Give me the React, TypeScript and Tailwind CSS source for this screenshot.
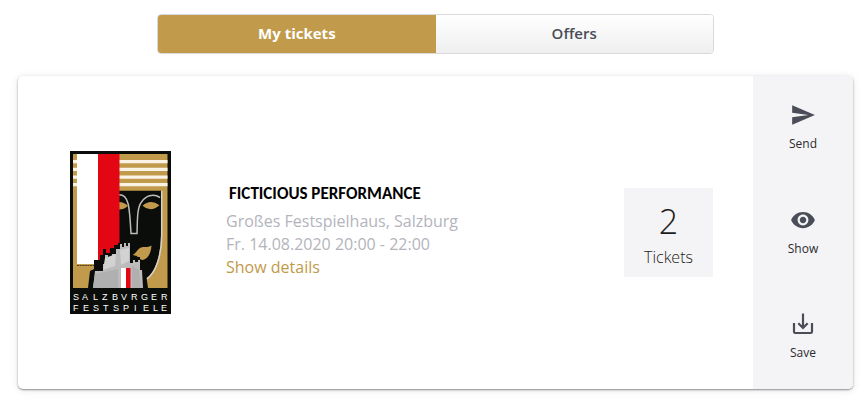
import React, { useState } from 'react';
import { MdSend, MdVisibility } from 'react-icons/md';

type Tab = 'tickets' | 'offers';

const tabs: { id: Tab; label: string }[] = [
  { id: 'tickets', label: 'My tickets' },
  { id: 'offers', label: 'Offers' },
];

const SaveIcon: React.FC = () => (
  <svg width="26" height="26" viewBox="0 0 26 26" fill="none" stroke="currentColor" strokeWidth="2.2" aria-hidden="true">
    <path d="M4 12v8.700q0 1.300 1.300 1.300h15.400q1.300 0 1.300-1.300V12" />
    <path d="M13 2.500v14.500M8.300 12.300l4.700 4.700 4.700-4.700" />
  </svg>
);

const FestivalLogo: React.FC = () => (
  <svg width="101" height="163" viewBox="0 0 101 163" role="img" aria-label="Salzburger Festspiele" className="shrink-0">
    <rect width="101" height="163" fill="#0b0d0b" />
    <rect x="3" y="3" width="94.5" height="134" fill="#c19a4b" />
    <path d="M3 10.7h94.5M3 18.4h94.5M3 26.2h94.5M3 33.6h94.5" stroke="#fbf4e6" strokeWidth="3.2" />

    {/* mask */}
    <path d="M49 39.7H91V84C91 104 85 122 76 128L72 137H49z" fill="#0b0d0b" />
    <path d="M91.7 40V84C91.7 104 86 122 76.5 128" fill="none" stroke="#d6d4cf" strokeWidth="1.5" />
    <path
      d="M49 43.8C59 43.5 59.5 56 61 82.5H67C67.5 68 67 57 71.5 51C75.5 45 83 42 90 46.5"
      fill="none"
      stroke="#bcbcbc"
      strokeWidth="1.5"
    />
    <path d="M49 51Q54 51 58 55Q54 58.5 49 58.5z" fill="#c19a4b" />
    <path d="M72.5 54.8Q80.5 47.5 89.5 54.3Q80.5 62 72.5 54.8z" fill="#c19a4b" />
    <path d="M62.5 104C66 103 67 98 71 96.5C74 95.5 77 97 81.5 94.5C81 101 79 107 73 109Q68 108 67 105z" fill="#c19a4b" />

    {/* flag */}
    <rect x="7" y="3" width="21" height="110" fill="#fff" />
    <rect x="28" y="3" width="21.5" height="107" fill="#e30613" />
    <path d="M7 114.5H24" stroke="#514323" strokeWidth="1.2" strokeDasharray="2 0.6" />

    {/* fortress */}
    <path
      d="M18 137L20 120 24 118V109H30V104H33V98H36V102H40V97H44V94H48V92H52V137z"
      fill="#0b0d0b"
    />
    <path d="M60 92H62V106H70V116H75L78 137H66z" fill="#0b0d0b" />
    <path
      d="M23 137L25 120H33V113H35V104H38V106H42V103H46V98H50V93H52V96H54V92H56V95H58V92H60V112H63V109H65V111H68V109H70V119H72L73 137z"
      fill="#bcbcbc"
    />
    <path d="M35 107L46 103 45 115 33 119zM50 99L59 97V110L51 114z" fill="#d2d2d2" />
    <path d="M25 123L48 118V137H23zM62 115L69 119 71 137H62z" fill="#b0b0b0" />
    <rect x="51" y="117" width="5" height="20" fill="#fff" />
    <rect x="56" y="117" width="4.5" height="20" fill="#e30613" />

    <g fill="#fff" fontFamily="'Liberation Sans', Arial, sans-serif" fontSize="9">
      <text y="149" x="3 12 23 32 42 51 61 71 81 91">SALZBVRGER</text>
      <text y="160" x="3 13 23 33 43 53 64 73 83 91">FESTSPIELE</text>
    </g>
  </svg>
);

interface ActionButtonProps {
  label: string;
  icon: React.ReactNode;
}

const ActionButton: React.FC<ActionButtonProps> = ({ label, icon }) => (
  <button type="button" className="flex w-full flex-col items-center gap-1.5 text-[#4a4d58]">
    {icon}
    <span className="text-xs leading-5 text-[#2b2b2f]">{label}</span>
  </button>
);

const TicketCard: React.FC = () => (
  <article className="flex overflow-hidden rounded-[5px] bg-white shadow-[0_1px_2px_rgba(0,0,0,0.42),0_1px_8px_rgba(0,0,0,0.1)]">
    <div className="flex flex-1 items-center py-[75px] pr-10 pl-[52px]">
      <FestivalLogo />
      <div className="mb-1 ml-[55px] flex-1 text-base leading-[23px] text-[#b3b4bb]">
        <h2 className="mb-1 pl-[3px] font-['Carlito','Lato',sans-serif] text-[17px] leading-6 font-bold text-black">
          FICTICIOUS PERFORMANCE
        </h2>
        <p>Großes Festspielhaus, Salzburg</p>
        <p>Fr. 14.08.2020 20:00 - 22:00</p>
        <a href="#details" className="text-[#c19a4b]">
          Show details
        </a>
      </div>
      <div className="flex size-[89px] flex-col items-center justify-center bg-[#f4f4f6] pt-2">
        <span className="text-[34px] leading-10 font-light text-[#1d1d20]">2</span>
        <span className="text-base leading-8 font-light text-[#1d1d20]">Tickets</span>
      </div>
    </div>
    <div className="flex w-[100px] flex-col justify-between bg-[#f4f4f6] py-[26px]">
      <ActionButton label="Send" icon={<MdSend size={26} />} />
      <ActionButton label="Show" icon={<MdVisibility size={26} />} />
      <ActionButton label="Save" icon={<SaveIcon />} />
    </div>
  </article>
);

export default function App() {
  const [active, setActive] = useState<Tab>('tickets');

  return (
    <main className="min-h-screen bg-white pt-[14px] pr-[11px] pb-3 pl-[18px] font-['Open_Sans',sans-serif]">
      <div role="tablist" className="mx-auto mb-[22px] flex h-10 w-2/3 overflow-hidden rounded border border-[#d9d9dc]">
        {tabs.map((tab) => (
          <button
            key={tab.id}
            type="button"
            role="tab"
            aria-selected={active === tab.id}
            onClick={() => setActive(tab.id)}
            className={`flex-1 pb-px text-[15px] ${
              active === tab.id
                ? 'bg-[#c19a4b] font-bold text-white'
                : 'bg-linear-to-b from-white to-[#efefef] font-semibold text-[#4a4d58]'
            }`}
          >
            {tab.label}
          </button>
        ))}
      </div>
      <TicketCard />
    </main>
  );
}
